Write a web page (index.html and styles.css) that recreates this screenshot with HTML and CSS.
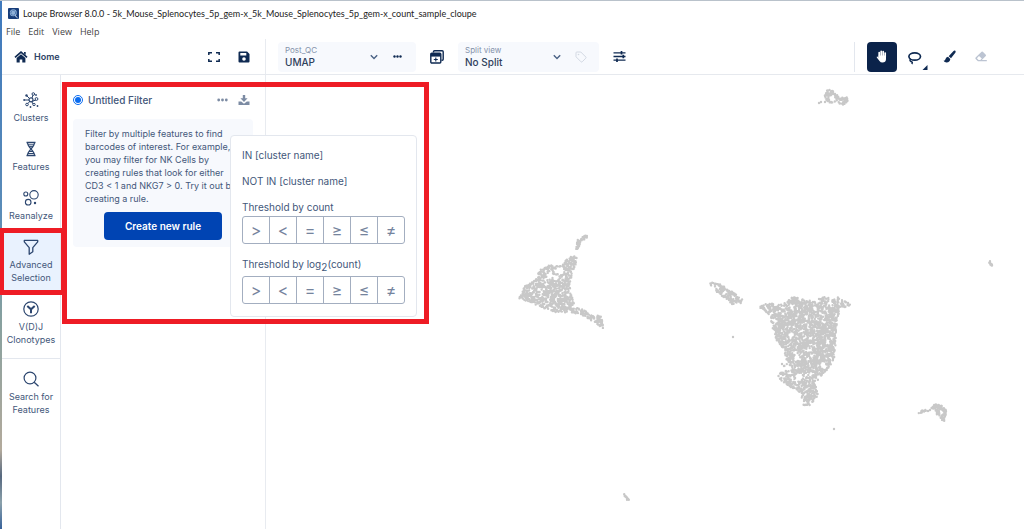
FILE: index.html
```html
<!DOCTYPE html>
<html lang="en">
<head>
<meta charset="utf-8">
<title>Loupe Browser 8.0.0</title>
<link rel="stylesheet" href="styles.css">
</head>
<body>
<div class="app">
  <header class="titlebar">
    <svg class="app-icon" width="11" height="11" viewBox="0 0 11 11"><rect width="11" height="11" rx="1" fill="#173d7a"/><circle cx="5.3" cy="4.8" r="3.5" fill="#8fb1d8"/><circle cx="5.3" cy="4.8" r="2.4" fill="none" stroke="#2b5a9c" stroke-dasharray="1 .6"/><path d="M7 7.5l2.5 2.3" stroke="#dce8f5"/></svg>
    <span>Loupe Browser 8.0.0 - 5k_Mouse_Splenocytes_5p_gem-x_5k_Mouse_Splenocytes_5p_gem-x_count_sample_cloupe</span>
  </header>
  <nav class="menubar" aria-label="Application menu">
    <button>File</button><button>Edit</button><button>View</button><button>Help</button>
  </nav>

  <div class="toolbar">
    <div class="toolbar-left">
      <a class="home" href="#home">
        <svg width="14" height="12" viewBox="0 0 14 12"><path d="M1 6.4L7 1.2l6 5.2" fill="none" stroke="#0f2a52" stroke-width="1.7"/><path d="M2.6 7L7 3.3 11.4 7v4.6H8.3V8.4H5.7v3.2H2.6zM10 1h1.7v3L10 2.6z" fill="#0f2a52"/></svg>
        Home
      </a>
      <button class="icon-button" aria-label="Full screen"><svg width="12" height="10" viewBox="0 0 12 10"><path d="M.8 3V.8H4M8 .8h3.2V3M11.200 7v2.200H8M4 9.200H.8V7" fill="none" stroke="#0f2a52" stroke-width="1.500"/></svg></button>
      <button class="icon-button" aria-label="Save"><svg width="12" height="12" viewBox="0 0 12 12"><path fill-rule="evenodd" d="M1.500.5h7.600l2.400 2.400v7.600a1 1 0 0 1-1 1h-9a1 1 0 0 1-1-1v-9a1 1 0 0 1 1-1zM2.300 2v2.500h6V2zM6 6.200a1.800 1.800 0 1 0 0 3.600 1.800 1.800 0 0 0 0-3.600z" fill="#0f2a52"/></svg></button>
    </div>
    <div class="toolbar-main">
      <div class="picker picker-projection">
        <div class="picker-field">
          <label for="projection">Post_QC</label>
          <select id="projection"><option>UMAP</option></select>
        </div>
        <svg width="8" height="6" viewBox="0 0 8 6"><path d="M.8 1.200L4 4.500l3.200-3.300" fill="none" stroke="#4b6285" stroke-width="1.400"/></svg>
        <button class="icon-button" aria-label="Projection options"><svg width="9" height="3" viewBox="0 0 9 3"><g fill="#0f2a52"><circle cx="1.500" cy="1.500" r="1.200"/><circle cx="4.500" cy="1.500" r="1.200"/><circle cx="7.500" cy="1.500" r="1.200"/></g></svg></button>
      </div>
      <button class="icon-button" aria-label="New window"><svg width="14" height="14" viewBox="0 0 14 14"><path d="M3.500 2.500V1.800q0-1 1-1h7.700q1 0 1 1v7.400q0 1-1 1h-.7" fill="none" stroke="#0f2a52" stroke-width="1.400"/><rect x=".8" y="3.200" width="10" height="9.800" rx="1" fill="#fff" stroke="#0f2a52" stroke-width="1.400"/><path d="M.8 3h10v3.600H.8z" fill="#0f2a52"/><path d="M5.800 7.500v4M3.800 9.500h4" stroke="#0f2a52" stroke-width="1.100"/></svg></button>
      <div class="picker picker-split">
        <div class="picker-field">
          <label for="split">Split view</label>
          <select id="split"><option>No Split</option></select>
        </div>
        <svg width="8" height="6" viewBox="0 0 8 6"><path d="M.8 1.200L4 4.500l3.200-3.300" fill="none" stroke="#4b6285" stroke-width="1.400"/></svg>
        <button class="icon-button" aria-label="Labels"><svg width="12" height="12" viewBox="0 0 12 12"><path d="M1 1.800q0-.8.800-.8h4l5 5q.6.600 0 1.200L7.200 10.800q-.6.600-1.200 0L1 5.800z" fill="none" stroke="#d3d9e3"/><circle cx="3.500" cy="3.500" r=".8" fill="#d3d9e3"/></svg></button>
      </div>
      <button class="icon-button" aria-label="Display settings"><svg width="13" height="11" viewBox="0 0 13 11"><path d="M.5 1.800h12M.5 5.500h12M.5 9.200h12" stroke="#0f2a52" stroke-width="1.300"/><path d="M8.500 0v3.600M10.300 3.700v3.600M4 7.400V11" stroke="#0f2a52" stroke-width="1.700"/></svg></button>
      <div class="tools">
        <button class="tool tool-active" aria-label="Pan"><svg width="12" height="13" viewBox="0 0 12 13"><path d="M3.200 7.500V2.600M5.200 6V1.300M7.200 6V1.500M9.200 7V3" stroke="#fff" stroke-width="1.700" stroke-linecap="round"/><path d="M2.500 5.500H10v3.800Q9.800 12.500 6.500 12.500q-2 0-3-1.600L.8 7.600q-.4-1 .6-1l1.500 1.300z" fill="#fff"/></svg></button>
        <button class="tool tool-lasso" aria-label="Lasso"><svg width="22" height="22" viewBox="0 0 22 22"><ellipse cx="8.700" cy="7.500" rx="5.800" ry="3.700" fill="none" stroke="#0f2a52" stroke-width="1.700"/><path d="M4.800 9.800q-1.600 1.800 0 2.600 2.400.5 1 2.600" fill="none" stroke="#0f2a52" stroke-width="1.500"/><path d="M21.500 16v5h-5z" fill="#0f2a52"/></svg></button>
        <button class="tool" aria-label="Brush"><svg width="13" height="13" viewBox="0 0 13 13"><path d="M12 .6q1.200.7.300 2.200L8 8.300 5.700 6.200 10.300 1.200Q11.200.3 12 .6zM5 6.800l2.300 2.200Q7 12.400 3.500 12.400 1 12.500.4 10.600q1.800.3 2-1.400Q3 7 5 6.800z" fill="#0f2a52"/></svg></button>
        <button class="tool" aria-label="Eraser"><svg width="12" height="11" viewBox="0 0 12 11"><path d="M6.600.8q.6-.6 1.200 0l3 3q.6.600 0 1.200L6.800 9h5v1.200H2.900L.6 7.900q-.6-.7 0-1.300zM4 5L1.900 7.200 3.600 9h1.700l1.500-1.400z" fill="#bcc4d2" fill-rule="evenodd"/></svg></button>
      </div>
    </div>
  </div>

  <div class="workspace">
    <nav class="rail" aria-label="Sections">
      <button class="rail-item"><svg width="16" height="16" viewBox="0 0 16 16"><g fill="none" stroke="#2c466f"><path d="M6.500 6.500L4 4M9 6l1-3M7 9l-2 2.500M10 9l3-1M9 10l1 2M6 8H2"/><circle cx="8" cy="7.800" r="2" stroke-width="1.200"/><circle cx="10.300" cy="2" r="1.300"/><circle cx="4" cy="12.500" r="1.300"/><circle cx="13.500" cy="7" r="1.400"/><circle cx="11" cy="12.500" r="1.200"/></g><g fill="#2c466f"><circle cx="3.500" cy="3.500" r="1.200"/><circle cx="1.200" cy="8" r="1"/><circle cx="13" cy="3" r=".9"/><circle cx="14.500" cy="14" r=".9"/><circle cx="7.500" cy="15" r=".9"/></g></svg><span>Clusters</span></button>
      <button class="rail-item"><svg width="16" height="16" viewBox="0 0 16 16"><g fill="none" stroke="#2c466f"><path d="M3.500 1.500h9M3.500 14.500h9" stroke-width="1.400"/><path d="M4.500 1.500c0 5.500 7 7.500 7 13M11.500 1.500c0 5.500-7 7.500-7 13" stroke-width="1.200"/><path d="M5 3.800h6M6 5.600h4M6 10.500h4M5 12.500h6"/></g></svg><span>Features</span></button>
      <button class="rail-item"><svg width="16" height="16" viewBox="0 0 16 16"><g fill="none" stroke="#2c466f" stroke-width="1.100"><circle cx="2.800" cy="4" r="2"/><circle cx="11" cy="4.800" r="4.200"/><circle cx="5.200" cy="12.200" r="2.800"/></g><circle cx="12" cy="13" r="1.200" fill="#2c466f"/></svg><span>Reanalyze</span></button>
      <button class="rail-item rail-item-active"><svg width="16" height="16" viewBox="0 0 16 16"><path d="M1.300 1.300h13.400v1.500L9.800 8.600v4.200l-3.600 2.400V8.600L1.300 2.800z" fill="none" stroke="#2c466f" stroke-width="1.300" stroke-linejoin="round"/></svg><span>Advanced<br>Selection</span></button>
      <button class="rail-item"><svg width="16" height="16" viewBox="0 0 16 16"><circle cx="8" cy="8" r="7.200" fill="none" stroke="#2c466f" stroke-width="1.200"/><path d="M4.300 5L8 8.300 11.700 5M8 8v4.200" fill="none" stroke="#2c466f" stroke-width="2"/></svg><span>V(D)J<br>Clonotypes</span></button>
      <hr class="rail-divider">
      <button class="rail-item"><svg width="16" height="16" viewBox="0 0 16 16"><circle cx="7" cy="7" r="5.900" fill="none" stroke="#2c466f" stroke-width="1.200"/><path d="M11.200 11.200l4.300 4" stroke="#2c466f" stroke-width="1.300"/></svg><span>Search for<br>Features</span></button>
    </nav>

    <aside class="panel">
      <div class="filter-head">
        <input type="radio" id="filter" name="filter" checked>
        <label for="filter">Untitled Filter</label>
        <button class="icon-button" aria-label="Filter options"><svg width="11" height="4" viewBox="0 0 11 4"><g fill="#7c8ba3"><circle cx="1.700" cy="2" r="1.400"/><circle cx="5.500" cy="2" r="1.400"/><circle cx="9.300" cy="2" r="1.400"/></g></svg></button>
        <button class="icon-button" aria-label="Download filter"><svg width="12" height="12" viewBox="0 0 12 12"><path d="M4.800 1h2.400v3.300h2.400L6 7.900 2.400 4.300h2.400zM.5 7.500h2.700L6 9.700l2.800-2.200h2.700V11H.5z" fill="#7c8ba3"/></svg></button>
      </div>
      <div class="card">
        <p>Filter by multiple features to find<br>barcodes of interest. For example,<br>you may filter for NK Cells by<br>creating rules that look for either<br>CD3 &lt; 1 and NKG7 &gt; 0. Try it out by<br>creating a rule.</p>
        <button class="primary">Create new rule</button>
      </div>
      <div class="popup">
        <button class="popup-option">IN [cluster name]</button>
        <button class="popup-option">NOT IN [cluster name]</button>
        <div class="threshold">
          <span>Threshold by count</span>
          <div class="operators"><button>&gt;</button><button>&lt;</button><button>=</button><button>≥</button><button>≤</button><button>≠</button></div>
        </div>
        <div class="threshold threshold-log">
          <span>Threshold by log<sub>2</sub>(count)</span>
          <div class="operators"><button>&gt;</button><button>&lt;</button><button>=</button><button>≥</button><button>≤</button><button>≠</button></div>
        </div>
      </div>
    </aside>

    <main class="plot">
      <svg id="scatter" viewBox="266 75 758 454" preserveAspectRatio="xMinYMin slice" role="img" aria-label="UMAP projection"></svg>
    </main>
  </div>

  <div class="highlight highlight-panel"></div>
  <div class="highlight highlight-rail"></div>
</div>
<script src="scatter.js"></script>
</body>
</html>
```
FILE: styles.css
```css
* { box-sizing: border-box; }

body {
  margin: 0;
  background: #fff;
  color: #43577a;
  font-family: Inter, "Liberation Sans", sans-serif;
  font-size: 10px;
}

button {
  margin: 0;
  padding: 0;
  border: 0;
  background: none;
  color: inherit;
  font: inherit;
}

svg { display: block; flex: none; }

.app {
  position: relative;
  display: flex;
  flex-direction: column;
  min-height: 100vh;
  padding-left: 2px;
  border-top: 1px solid #b9c2cb;
  overflow: hidden;
}

.app::before {
  content: "";
  position: absolute;
  inset: 0 auto 0 0;
  width: 2px;
  background: linear-gradient(#3f79bd, #5b8cb8 40%, #86a09f 60%, #b3aa9c 85%, #56687f 90%, #8ba1ab 95%, #37629a);
}

.titlebar {
  display: flex;
  align-items: center;
  gap: 4px;
  height: 24px;
  padding-left: 6px;
  color: #222;
  font: 9px Lato, sans-serif;
  white-space: nowrap;
}

.menubar {
  display: flex;
  gap: 8px;
  height: 14px;
  padding-left: 4px;
  color: #444;
  font: 9px/14px "Open Sans", sans-serif;
}

.toolbar {
  display: flex;
  height: 36px;
  border-bottom: 1px solid #e6e9ee;
}

.toolbar-left {
  display: flex;
  align-items: center;
  gap: 18px;
  width: 264px;
  padding: 0 15px 0 12px;
  border-right: 1px solid #e8ebf0;
}

.home {
  display: flex;
  align-items: center;
  gap: 6px;
  margin-right: auto;
  color: #2c4266;
  font-size: 9px;
  font-weight: 600;
  text-decoration: none;
}

.toolbar-main {
  display: flex;
  flex: 1;
  align-items: center;
  gap: 14px;
  padding: 0 27px 0 12px;
}

.picker {
  display: flex;
  align-items: center;
  height: 30px;
  padding: 0 12px 0 7px;
  border-radius: 4px;
  background: #f7f9fd;
}

.picker-projection { gap: 15px; width: 138px; padding-right: 14px; }
.picker-split { gap: 14px; width: 141px; }

.picker-field {
  display: flex;
  flex: 1;
  flex-direction: column;
}

.picker-field label {
  color: #8492aa;
  font-size: 8px;
  line-height: 10px;
}

.picker-field select {
  padding: 0;
  border: 0;
  appearance: none;
  background: none;
  color: #2f405c;
  font: 500 10px/14px Inter, sans-serif;
}

.tools {
  display: flex;
  align-items: center;
  margin-left: auto;
  padding-left: 12px;
  border-left: 1px solid #e3e7ee;
}

.tool {
  display: flex;
  align-items: center;
  justify-content: center;
  width: 32px;
  height: 30px;
  border-radius: 4px;
}

.tool-active { width: 30px; background: #0b234a; }

.tool-lasso { width: 36px; padding-left: 4px; padding-top: 6px; }

.workspace {
  display: flex;
  flex: 1;
}

.rail {
  width: 59px;
  padding-top: 9px;
  border-right: 1px solid #e3e7ee;
}

.rail-item {
  display: flex;
  flex-direction: column;
  align-items: center;
  gap: 3px;
  width: 100%;
  padding: 8px 0 9px;
  font-size: 9px;
  line-height: 13px;
}

.rail-item-active { background: #e9f2fe; }

.rail-divider {
  height: 1px;
  margin: 3px 0 4px;
  border: 0;
  background: #e3e7ee;
}

.panel {
  position: relative;
  width: 205px;
  padding: 17px 12px;
  border-right: 1px solid #e8ebf0;
}

.filter-head {
  display: flex;
  align-items: center;
  gap: 10px;
  height: 16px;
  padding-right: 3px;
}

.filter-head input {
  width: 10px;
  height: 10px;
  margin: 0;
  accent-color: #0a6cf0;
}

.filter-head label {
  margin: 0 auto 0 -5px;
  font-weight: 500;
}

.card {
  margin-top: 11px;
  padding: 8px 12px 7px;
  border-radius: 4px;
  background: #f7f9fd;
}

.card p {
  margin: 0 0 7px;
  font-size: 9px;
  line-height: 13px;
  white-space: nowrap;
}

.primary {
  display: block;
  width: 118px;
  height: 28px;
  margin: 0 auto;
  border-radius: 4px;
  background: #0044b3;
  color: #fff;
  font-weight: 600;
}

.popup {
  position: absolute;
  top: 60px;
  left: 169px;
  z-index: 1;
  display: flex;
  flex-direction: column;
  align-items: flex-start;
  width: 187px;
  padding: 6px 11px 12px;
  border: 1px solid #e3e7ee;
  border-radius: 4px;
  background: #fff;
}

.popup-option, .threshold span {
  line-height: 26px;
}

.threshold {
  display: flex;
  flex-direction: column;
  align-self: stretch;
}

.threshold span { margin-bottom: -4px; }

.threshold-log { margin-top: 7px; }
.threshold-log span { margin-bottom: -1px; }

.threshold sub {
  font-size: 10px;
  line-height: 0;
}

.operators {
  display: flex;
  border: 1px solid #a3aec0;
  border-radius: 3px;
}

.operators button {
  flex: 1;
  height: 26px;
  color: #75849d;
  font-size: 16px;
  line-height: 24px;
}

.operators button + button { border-left: 1px solid #a3aec0; }

.plot {
  position: relative;
  flex: 1;
  min-width: 0;
}

.plot svg {
  width: 100%;
  height: 100%;
}

.highlight {
  position: absolute;
  z-index: 2;
  border: 5px solid #ee1c25;
  pointer-events: none;
}

.highlight-panel {
  top: 81px;
  left: 62px;
  width: 367px;
  height: 242px;
}

.highlight-rail {
  top: 227px;
  left: -1px;
  width: 67px;
  height: 67px;
}
```
FILE: scatter.js
```js
// Draws the cell projection: each cluster is an outline filled with small dots.
let seed = 17;
function random() {
  seed = (seed * 1664525 + 1013904223) % 4294967296;
  return seed / 4294967296;
}

// outline: polygon corners; gaps: [x, y, radius] areas left empty; density: dots per square unit
const clusters = [
  { outline: [[576,249],[577,240],[581,237],[587,235],[587,238],[581,241],[579,249]], density: 0.7 },
  { outline: [[575,254],[577,258],[575,268],[571,278],[571,290],[574,303],[567,313],[558,313],[545,309],[532,303],[519,298],[524,287],[535,280],[540,270],[548,265],[562,266],[566,260]], gaps: [[560,271,4],[550,275,3],[556,278,3],[531,291,2],[544,289,2],[568,295,2],[548,300,2]], density: 0.44 },
  { outline: [[570,308],[580,308],[592,315],[596,318],[597,315],[601,316],[604,329],[596,324],[585,316],[572,313]], density: 0.6 },
  { outline: [[709,282],[720,284],[731,291],[743,299],[742,303],[732,304],[722,296],[713,289]], gaps: [[717,287,2],[725,292,2],[733,297,2]], density: 0.6 },
  { outline: [[758,306],[770,303],[783,305],[790,297],[800,298],[812,301],[825,297],[836,300],[838,297],[851,304],[848,307],[841,308],[838,316],[836,336],[835,355],[832,363],[826,371],[820,377],[816,384],[818,395],[810,406],[803,405],[801,393],[789,386],[778,378],[779,371],[786,374],[784,366],[787,362],[784,350],[777,341],[773,330],[770,315]], gaps: [[791,335,3],[797,358,3],[808,359,2],[823,365,3],[799,377,4],[811,374,2],[824,322,2],[802,331,2],[776,321,2],[787,368,3],[828,342,2],[815,309,2],[765,307,1]], density: 0.46 },
  { outline: [[824,97],[828,89],[832,90],[840,98],[847,97],[848,101],[843,105],[838,103],[833,103],[829,103]], gaps: [[832,99,3]], density: 0.6 },
  { outline: [[918,413],[925,408],[926,411],[920,414]], density: 0.8 },
  { outline: [[931,408],[935,404],[941,405],[946,410],[946,414],[944,422],[937,415],[935,409]], gaps: [[941,412,2]], density: 0.8 },
  { outline: [[988,262],[990,261],[993,266],[992,267]], density: 2 },
  { outline: [[622,494],[624,494],[629,500],[627,500]], density: 2 }
];
const strays = [[819,103],[821,102],[825,102],[733,337],[834,429],[830,102],[784,366],[782,364],[928,411],[930,410]];

function inside(x, y, outline) {
  let hit = false;
  for (let i = 0, j = outline.length - 1; i < outline.length; j = i++) {
    const [ax, ay] = outline[i], [bx, by] = outline[j];
    if ((ay > y) !== (by > y) && x < (bx - ax) * (y - ay) / (by - ay) + ax) hit = !hit;
  }
  return hit;
}

let d = "";
for (const { outline, gaps = [], density } of clusters) {
  const xs = outline.map(p => p[0]), ys = outline.map(p => p[1]);
  const x0 = Math.min(...xs), y0 = Math.min(...ys);
  const w = Math.max(...xs) - x0, h = Math.max(...ys) - y0;
  for (let n = w * h * density; n > 0; n--) {
    const x = x0 + random() * w, y = y0 + random() * h;
    if (!inside(x, y, outline)) continue;
    if (gaps.some(([gx, gy, r]) => Math.hypot(x - gx, y - gy) < r)) continue;
    d += `M${x.toFixed(1)} ${y.toFixed(1)}h0`;
  }
}
for (const [x, y] of strays) d += `M${x} ${y}h0`;

const path = document.createElementNS("http://www.w3.org/2000/svg", "path");
path.setAttribute("d", d);
path.setAttribute("stroke", "#c8c8c8");
path.setAttribute("stroke-width", "2.4");
path.setAttribute("stroke-linecap", "round");
document.getElementById("scatter").append(path);
```
